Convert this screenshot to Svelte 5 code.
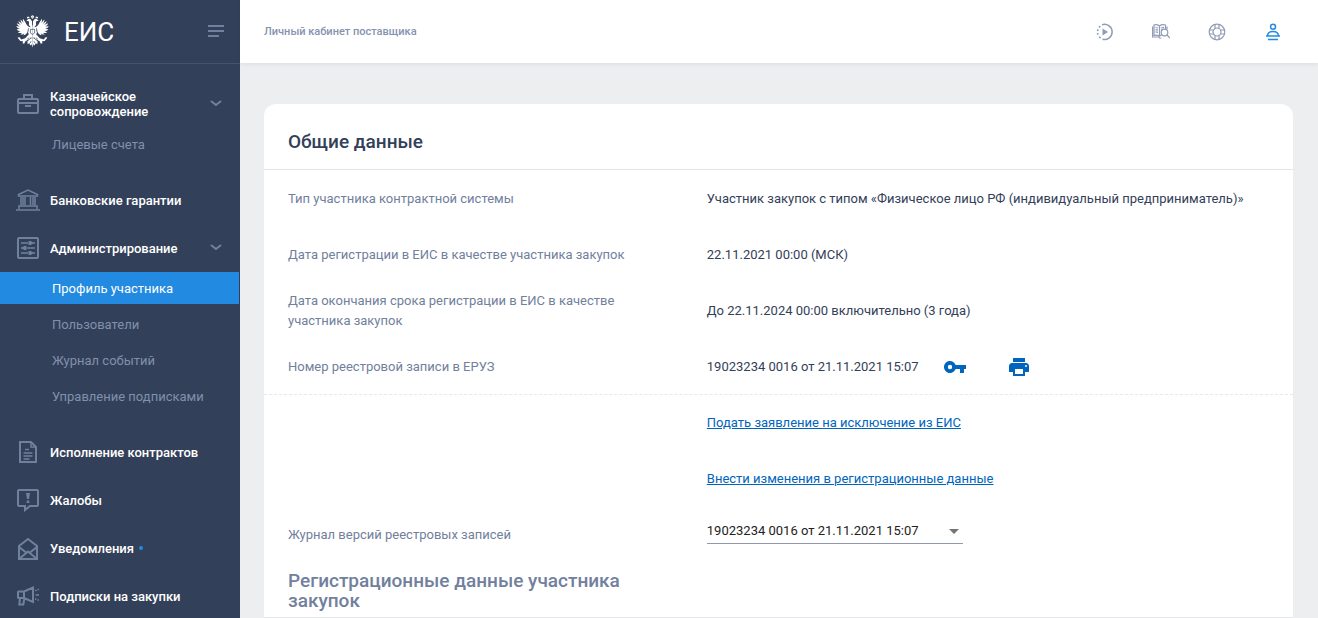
<script lang="ts">
	type NavItem = {
		label: string;
		icon: string;
		dot?: boolean;
		children?: string[];
	};

	const nav: NavItem[] = [
		{ label: 'Казначейское сопровождение', icon: 'case', children: ['Лицевые счета'] },
		{ label: 'Банковские гарантии', icon: 'bank' },
		{
			label: 'Администрирование',
			icon: 'settings',
			children: ['Профиль участника', 'Пользователи', 'Журнал событий', 'Управление подписками']
		},
		{ label: 'Исполнение контрактов', icon: 'doc' },
		{ label: 'Жалобы', icon: 'complaint' },
		{ label: 'Уведомления', icon: 'mail', dot: true },
		{ label: 'Подписки на закупки', icon: 'horn' }
	];

	let active = $state('Профиль участника');
	let version = $state('19023234 0016 от 21.11.2021 15:07');
</script>

{#snippet navIcon(name: string)}
	<svg class="nav-icon" viewBox="0 0 24 24" aria-hidden="true">
		{#if name === 'case'}
			<rect x="2" y="7" width="20" height="14" rx="1" />
			<path d="M8 7V3h8v4M2 11h20M9 14h6" />
		{:else if name === 'bank'}
			<path class="fine" d="M2.500 8V6.500L12 2l9.500 4.500V8zM5 9v8M9 9v8M14.500 9v8M19 9v8M7 9v8M17 9v8M3 21v-3h18v3M0 22h24" />
		{:else if name === 'settings'}
			<rect x="2" y="2" width="20" height="20" rx="1" />
			<path class="fine" d="M5 7h7M16 7h3M5 12h2.500M11 12h8M5 17h7M16 17h3" />
			<path class="solid" d="M12.500 5h2.500L17 7l-2 2h-2.500zM10.500 10H8l-2 2 2 2h2.500zM12.500 15h2.500l2 2-2 2h-2.500z" />
		{:else if name === 'doc'}
			<path d="M4 2h11l5 5v15H4z" />
			<path class="fine" d="M15 2v5h5M9 9.500h4M7.500 13h9M7.500 16h9M7.500 19h6" />
		{:else if name === 'complaint'}
			<path d="M3 2h18q1 0 1 1v14q0 1-1 1h-7l-5 4v-4H3q-1 0-1-1V3q0-1 1-1z" />
			<path class="solid" d="M10 5h4l-1 6h-2zM10.700 12.500h2.600V15h-2.600z" />
		{:else if name === 'mail'}
			<path d="M3 10l9-7 9 7v13H3zM3 11l7 5.500M21 11l-7 5.500M3 23l9-7.500 9 7.500" />
		{:else}
			<path d="M2.500 7.500H8V14H2.500Q2 14 2 13.500V8q0-.5.500-.5zM8 7.500l9-4V18l-9-4M4 14l-.7 6.500h4L8.500 14" />
			<path class="fine" d="M19 6.500h1.500M21.500 5.500H23M19.500 11H23M19 15h1.500M21.500 16H23" />
		{/if}
	</svg>
{/snippet}

<div class="shell">
	<aside class="sidebar">
		<div class="brand">
			<svg class="eagle" viewBox="0 0 34 34" aria-hidden="true">
				<defs>
					<g id="eagle-half">
						<path d="M16.500 6.500 14.500 3.800l-2 .4-1.900 2 2.200-.1.700 1.600-.3 2.300 1.400 2.200 2.400.8z" />
						<path d="M14.500 12.500c-2.600-.6-3.900-3-5-5.300L7.300 3.800c-.5 1.700 0 3 .8 4.500L4.800 4.600c-.3 1.800.6 3.100 1.700 4.600L2.500 6.200c.1 1.800 1.300 3.100 2.600 4.200L.9 8.500c.4 1.800 1.800 2.800 3.300 3.700L.3 11.400c.6 1.700 2.100 2.500 3.800 3L.7 14.600c1 1.600 2.500 2 4.200 2l-2.900 1.100c1.300 1.100 2.800 1 4.400.5l-2 1.800c1.600.5 3-.1 4.200-1.200l-1 2.100c1.600 0 2.900-1.200 3.800-2.600z" />
						<path d="m13.200 12.500 3.800-.2V24l-3-1.800-1.500-4z" />
						<path d="m13 20-3.500 4-4 1.200-2.200-2.500-1.600.8 2.700 3.400 2.800.2-.4 2 1.600.5 1.300-2.600 4.100-2.200 2-2.300z" />
						<path d="m15.500 24-3.800 3.300.4 2.900 1.600-1.400.9 2.600 1.400-1.300L17 33.500V24z" />
						<path d="m17 0-1.600 1.400.6 1.600L17 4zM11.200 1.600l1.200.6.900-.8.700 1.700-2.500.5z" />
					</g>
				</defs>
				<use href="#eagle-half" />
				<use href="#eagle-half" transform="translate(34 0) scale(-1 1)" />
				<path
					class="gap"
					d="M14.800 14.800h4.400v3.700L17 20l-2.200-1.500zM17 5v5.500M13.500 23.500l-2 1.500M20.500 23.500l2 1.500M15.500 27l-1 2M18.500 27l1 2M13 13.500l-.8 3.500M21 13.500l.8 3.500"
				/>
			</svg>
			<span class="brand-name">ЕИС</span>
			<button class="burger" type="button" aria-label="Свернуть меню">
				<svg viewBox="0 0 16 14" aria-hidden="true"><path d="M0 1h16M0 6h16M0 11h11" /></svg>
			</button>
		</div>

		<nav>
			{#each nav as item}
				<button class="nav-item" type="button">
					{@render navIcon(item.icon)}
					<span class="nav-label">{item.label}{#if item.dot}<i class="dot"></i>{/if}</span>
					{#if item.children}
						<svg class="chevron" viewBox="0 0 12 8" aria-hidden="true"><path d="m1 1 5 4 5-4" /></svg>
					{/if}
				</button>
				{#if item.children}
					<div class="sub">
						{#each item.children as child}
							<a href="#profile" class:active={active === child} onclick={() => (active = child)}>{child}</a>
						{/each}
					</div>
				{/if}
			{/each}
		</nav>
	</aside>

	<div class="page">
		<header class="topbar">
			<span class="crumb">Личный кабинет поставщика</span>
			<div class="tools">
				<button type="button" aria-label="Видео">
					<svg viewBox="0 0 18 18" aria-hidden="true">
						<path d="M6 1.700A7.600 7.600 0 1 1 6.500 16.200M4.600 15.100 3.200 13.700M2 11.800 1.500 10M1.500 8 2 6.200M3 4.500l1.300-1.400" />
						<path class="fill" d="M6.500 5.500 12 9l-5.500 3.500z" />
					</svg>
				</button>
				<button type="button" aria-label="Справочник">
					<svg class="thin" viewBox="0 0 18 18" aria-hidden="true">
						<path
							d="M7.500 3Q5 1 2 2v10.500q3-1 5.500.5Q9 12 10 12M7.500 3Q10 1 13.500 2v4M7.500 3v10M.5 3.500V14h6.500l.5 1h2M3.500 4.500l2.500.5M3.500 6.700l2.500.5M3.500 8.900l2.500.5M9 5l3-.7M9 7l1.500-.3M15 3.500V6"
						/>
						<circle cx="12.500" cy="9.500" r="3.300" />
						<path d="m15 12 3 3" />
					</svg>
				</button>
				<button type="button" aria-label="Помощь">
					<svg class="thin" viewBox="0 0 18 18" aria-hidden="true">
						<circle cx="9" cy="9" r="7.800" />
						<circle cx="9" cy="9" r="4" />
						<path d="M7 1.500v4M11 1.500v4M7 12.500v4M11 12.500v4M1.500 7h4M1.500 11h4M12.500 7h4M12.500 11h4" />
					</svg>
				</button>
				<button class="user" type="button" aria-label="Профиль">
					<svg viewBox="0 0 18 18" aria-hidden="true">
						<circle cx="9" cy="3.700" r="2.500" />
						<path d="M2 13h14M3.500 12.500c.5-5.500 10.500-5.500 11 0M4 16.500h10" />
					</svg>
				</button>
			</div>
		</header>

		<main>
			<section class="card">
				<h1>Общие данные</h1>

				<dl>
					<div class="row">
						<dt>Тип участника контрактной системы</dt>
						<dd>Участник закупок с типом «Физическое лицо РФ (индивидуальный предприниматель)»</dd>
					</div>
					<div class="row">
						<dt>Дата регистрации в ЕИС в качестве участника закупок</dt>
						<dd>22.11.2021 00:00 (МСК)</dd>
					</div>
					<div class="row">
						<dt>Дата окончания срока регистрации в ЕИС в качестве участника закупок</dt>
						<dd>До 22.11.2024 00:00 включительно (3 года)</dd>
					</div>
					<div class="row">
						<dt>Номер реестровой записи в ЕРУЗ</dt>
						<dd class="record">
							<span>19023234 0016 от 21.11.2021 15:07</span>
							<button type="button" aria-label="Ключ">
								<svg viewBox="0 0 24 24" aria-hidden="true">
									<path
										fill-rule="evenodd"
										d="M12.650 10C11.830 7.670 9.610 6 7 6c-3.310 0-6 2.690-6 6s2.690 6 6 6c2.610 0 4.830-1.670 5.650-4H17v4h4v-4h2v-4zM7 14.200a2.200 2.200 0 1 1 0-4.400 2.200 2.200 0 0 1 0 4.400z"
									/>
								</svg>
							</button>
							<button type="button" aria-label="Печать">
								<svg viewBox="0 0 24 24" aria-hidden="true">
									<path
										fill-rule="evenodd"
										d="M19 8H5c-1.660 0-3 1.340-3 3v6h4v4h12v-4h4v-6c0-1.660-1.340-3-3-3zm-3 11H8v-5h8v5zm3-7a1 1 0 1 1 0-2 1 1 0 0 1 0 2zM18 3H6v4h12z"
									/>
								</svg>
							</button>
						</dd>
					</div>
				</dl>

				<div class="actions">
					<div class="row"><a href="#exclude">Подать заявление на исключение из ЕИС</a></div>
					<div class="row"><a href="#edit">Внести изменения в регистрационные данные</a></div>
					<div class="row">
						<label for="version">Журнал версий реестровых записей</label>
						<div class="select">
							<select id="version" bind:value={version}>
								<option>19023234 0016 от 21.11.2021 15:07</option>
							</select>
							<svg viewBox="0 0 10 5" aria-hidden="true"><path d="M0 0h10L5 5z" /></svg>
						</div>
					</div>
				</div>

				<div class="section-head">
					<h2>Регистрационные данные участника закупок</h2>
				</div>
			</section>
		</main>
	</div>
</div>

<style>
	:global(body) {
		font-family: Roboto, 'Liberation Sans', sans-serif;
		font-size: 13px;
		color: #334059;
		background: #edeef0;
	}

	button {
		padding: 0;
		border: 0;
		background: none;
		font: inherit;
		color: inherit;
		cursor: pointer;
	}

	.shell {
		display: flex;
		height: 100vh;
		overflow: hidden;
	}

	.sidebar {
		flex: 0 0 240px;
		overflow: hidden;
		background: #334059;
		color: #fff;
	}

	.brand {
		display: flex;
		align-items: center;
		box-sizing: border-box;
		height: 64px;
		padding: 0 16px;
		border-bottom: 1px solid #46536d;
	}

	.eagle {
		width: 33px;
		height: 33px;
		fill: #fff;
	}

	.gap {
		fill: none;
		stroke: #334059;
		stroke-width: 0.7;
	}

	.brand-name {
		flex: 1;
		margin-left: 15px;
		font-size: 26px;
		line-height: 32px;
	}

	.burger svg {
		display: block;
		width: 16px;
		height: 14px;
		stroke: #71809d;
		stroke-width: 2;
	}

	nav {
		padding-top: 16px;
	}

	.nav-item {
		display: flex;
		align-items: center;
		width: 100%;
		height: 48px;
		padding: 0 18px 0 16px;
		text-align: left;
		font-weight: 500;
		line-height: 15px;
	}

	.nav-icon {
		flex: none;
		width: 24px;
		height: 24px;
		margin-right: 10px;
		fill: none;
		stroke: #71809d;
		stroke-width: 2;
	}

	.nav-icon .fine {
		stroke-width: 1.5;
	}

	.nav-icon .solid {
		fill: #71809d;
		stroke: none;
	}

	.nav-label {
		flex: 1;
	}

	.dot {
		display: inline-block;
		width: 4px;
		height: 4px;
		margin: 0 0 3px 5px;
		border-radius: 50%;
		background: #228ae0;
	}

	.chevron {
		flex: none;
		width: 12px;
		height: 8px;
		fill: none;
		stroke: #71809d;
		stroke-width: 2;
	}

	.sub {
		display: flex;
		flex-direction: column;
		gap: 4px;
		margin-bottom: 16px;
	}

	.sub a {
		margin-right: 1px;
		padding: 2px 0 0 52px;
		line-height: 30px;
		color: #8090ad;
		text-decoration: none;
	}

	.sub a.active {
		background: #228ae0;
		color: #fff;
	}

	.page {
		display: flex;
		flex: 1;
		flex-direction: column;
		min-width: 0;
	}

	.topbar {
		display: flex;
		flex: none;
		align-items: center;
		justify-content: space-between;
		height: 63px;
		padding: 0 36px 0 24px;
		background: #fff;
		box-shadow: 0 1px 4px rgba(51, 64, 89, 0.1);
	}

	.crumb {
		font-size: 11px;
		font-weight: 500;
		color: #8593b0;
	}

	.tools {
		display: flex;
		gap: 38px;
	}

	.tools svg {
		display: block;
		width: 18px;
		height: 18px;
		fill: none;
		stroke: #909bb5;
		stroke-width: 1.5;
	}

	.tools svg.thin {
		stroke-width: 1.2;
	}

	.tools .fill {
		fill: #909bb5;
		stroke: none;
	}

	.tools .user svg {
		stroke: #228ae0;
	}

	main {
		flex: 1;
		min-height: 0;
		padding: 41px 25px 0 24px;
	}

	.card {
		min-height: 100%;
		border-radius: 12px 12px 0 0;
		background: #fff;
	}

	h1,
	h2 {
		margin: 0;
		font-size: 19px;
		font-weight: 500;
		line-height: 20px;
	}

	h1 {
		padding: 28px 24px 17px;
		border-bottom: 1px solid #e3e5eb;
	}

	dl {
		margin: 0;
		border-bottom: 1px dashed #e6e8ee;
	}

	.row,
	.section-head {
		display: grid;
		grid-template-columns: minmax(0, 2fr) minmax(0, 3fr);
		column-gap: 44px;
		padding: 0 24px;
	}

	.row {
		align-items: center;
		box-sizing: border-box;
		min-height: 56px;
		line-height: 20px;
	}

	dl .row {
		padding-top: 2px;
	}

	dt,
	label,
	h2 {
		color: #71809d;
	}

	dd {
		margin: 0;
	}

	.record {
		display: flex;
		align-items: center;
	}

	.record button {
		margin-left: 24px;
	}

	.record button + button {
		margin-left: 40px;
	}

	.record svg {
		display: block;
		width: 24px;
		height: 24px;
		fill: #0065bd;
	}

	.actions a {
		grid-column: 2;
		justify-self: start;
		color: #0065bd;
	}

	.select {
		position: relative;
		width: 256px;
		margin-bottom: 8px;
	}

	select {
		display: block;
		width: 100%;
		height: 25px;
		padding: 0;
		border: 0;
		border-bottom: 1px solid #9098b0;
		border-radius: 0;
		background: none;
		appearance: none;
		font: inherit;
		color: #222;
	}

	.select svg {
		position: absolute;
		top: 10px;
		right: 4px;
		width: 10px;
		height: 5px;
		fill: #757575;
		pointer-events: none;
	}

	.section-head {
		padding-top: 8px;
		padding-bottom: 6px;
		border-bottom: 1px solid #e3e5eb;
	}
</style>
